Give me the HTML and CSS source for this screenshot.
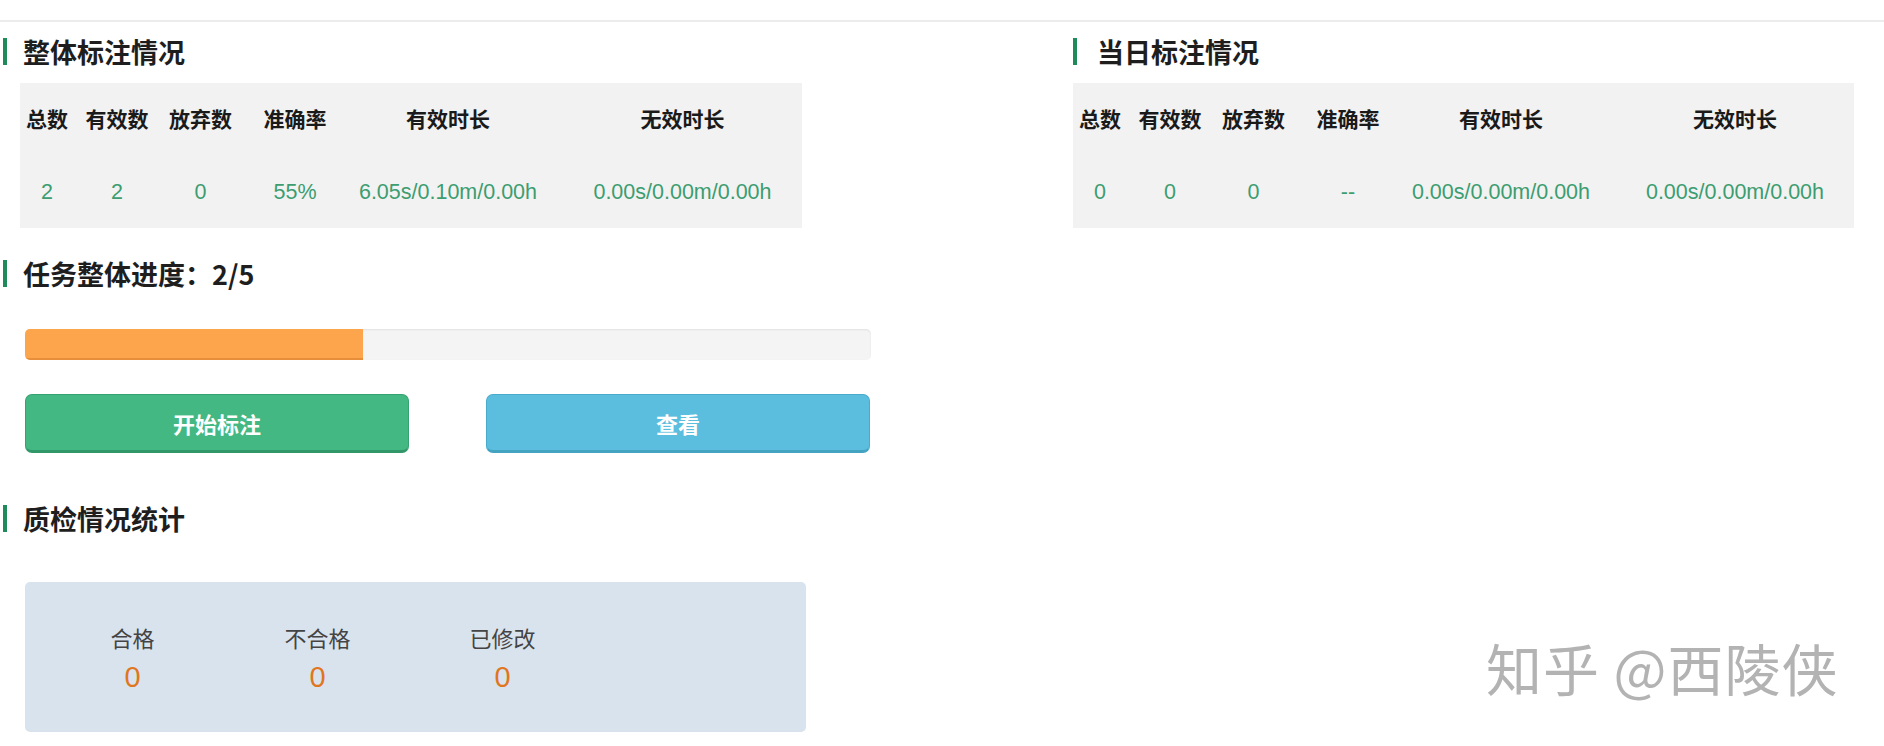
FILE: index.html
```html
<!DOCTYPE html>
<html lang="zh-CN">
<head>
<meta charset="utf-8">
<title>标注情况</title>
<link rel="stylesheet" href="styles.css">
</head>
<body>
<div class="topline"></div>
<div class="columns">
  <div class="left">
    <h2 class="heading">整体标注情况</h2>
    <div class="stats stats-left">
      <div class="th">总数</div><div class="th">有效数</div><div class="th">放弃数</div><div class="th">准确率</div><div class="th">有效时长</div><div class="th last">无效时长</div>
      <div class="td">2</div><div class="td">2</div><div class="td">0</div><div class="td">55%</div><div class="td">6.05s/0.10m/0.00h</div><div class="td last">0.00s/0.00m/0.00h</div>
    </div>

    <h2 class="heading heading-progress">任务整体进度：2/5</h2>
    <div class="progress"><div class="progress-fill" style="width:40%"></div></div>

    <div class="buttons">
      <button class="btn btn-green">开始标注</button>
      <button class="btn btn-blue">查看</button>
    </div>

    <h2 class="heading heading-quality">质检情况统计</h2>
    <div class="quality">
      <div class="q-item"><div class="q-label">合格</div><div class="q-value">0</div></div>
      <div class="q-item"><div class="q-label">不合格</div><div class="q-value">0</div></div>
      <div class="q-item"><div class="q-label">已修改</div><div class="q-value">0</div></div>
    </div>
  </div>

  <div class="right">
    <h2 class="heading heading-right">当日标注情况</h2>
    <div class="stats">
      <div class="th">总数</div><div class="th">有效数</div><div class="th">放弃数</div><div class="th">准确率</div><div class="th">有效时长</div><div class="th last">无效时长</div>
      <div class="td">0</div><div class="td">0</div><div class="td">0</div><div class="td">--</div><div class="td">0.00s/0.00m/0.00h</div><div class="td last">0.00s/0.00m/0.00h</div>
    </div>
  </div>
</div>
<div class="watermark">知乎 @西陵侠</div>
</body>
</html>
```

FILE: styles.css
```css
html, body {
  margin: 0;
  padding: 0;
  background: #ffffff;
}

body {
  font-family: "Noto Sans CJK SC", "Noto Sans", sans-serif;
  color: #222222;
  position: relative;
  height: 746px;
  overflow: hidden;
}

.topline {
  margin-top: 20px;
  height: 2px;
  background: #ececec;
}

.columns {
  display: flex;
}

.left {
  width: 1070px;
  padding-left: 3px;
}

.right {
  width: 781px;
}

.heading {
  margin: 16px 0 0 0;
  display: flex;
  align-items: center;
  gap: 16px;
  height: 27px;
  font-size: 27px;
  line-height: 27px;
  font-weight: 700;
  color: #1e1e1e;
}

.heading::before {
  content: "";
  width: 4px;
  height: 27px;
  background: #1f8a5a;
  flex: none;
}

.heading-right {
  gap: 20px;
}

.heading-progress {
  margin-top: 32px;
}

.heading-quality {
  margin-top: 52px;
}

.stats {
  margin-top: 18px;
  background: #f2f2f2;
  display: grid;
  grid-template-columns: 54px 86px 81px 108px 198px 1fr;
  grid-template-rows: 78px 62px;
  padding-bottom: 5px;
  text-align: center;
}

.stats-left {
  margin-left: 17px;
  width: 782px;
}

.th {
  font-size: 21px;
  font-weight: 700;
  color: #1a1a1a;
  display: flex;
  align-items: center;
  justify-content: center;
  white-space: nowrap;
  padding-bottom: 8px;
}

.td {
  font-family: "Liberation Sans", Arial, sans-serif;
  font-size: 21.5px;
  color: #3c9d70;
  display: flex;
  align-items: center;
  justify-content: center;
  white-space: nowrap;
}

.last {
  padding-left: 16px;
}

.progress {
  margin: 42px 0 0 22px;
  width: 846px;
  height: 31px;
  background: #f4f4f4;
  border-radius: 5px;
  box-shadow: inset 0 1px 2px rgba(0, 0, 0, 0.08);
  overflow: hidden;
}

.progress-fill {
  height: 100%;
  background: #fca54d;
  box-shadow: inset 0 -2px 0 rgba(190, 100, 20, 0.35);
}

.buttons {
  margin: 34px 0 0 22px;
  display: flex;
  gap: 77px;
}

.btn {
  width: 384px;
  height: 59px;
  border-radius: 7px;
  font-family: "Noto Sans CJK SC", sans-serif;
  font-size: 22px;
  font-weight: 700;
  color: #ffffff;
  cursor: pointer;
  padding: 0;
}

.btn-green {
  background: #44b882;
  border: 1px solid #36a271;
  border-bottom: 3px solid #329768;
}

.btn-blue {
  background: #5bbede;
  border: 1px solid #4aaccc;
  border-bottom: 3px solid #45a3c2;
}

.quality {
  margin: 50px 0 0 22px;
  width: 781px;
  height: 150px;
  box-sizing: border-box;
  padding: 40px 0 0 15px;
  background: #d9e3ee;
  border-radius: 5px;
  display: flex;
}

.q-item {
  width: 185px;
  text-align: center;
}

.q-label {
  font-size: 22px;
  line-height: 30px;
  color: #444444;
}

.q-value {
  margin-top: 7px;
  font-family: "Liberation Sans", Arial, sans-serif;
  font-size: 29px;
  line-height: 36px;
  color: #e0761e;
}

.watermark {
  position: absolute;
  left: 1486px;
  top: 632px;
  font-size: 56px;
  line-height: 70px;
  color: #b3b3b3;
  white-space: nowrap;
  letter-spacing: 1px;
}
```
